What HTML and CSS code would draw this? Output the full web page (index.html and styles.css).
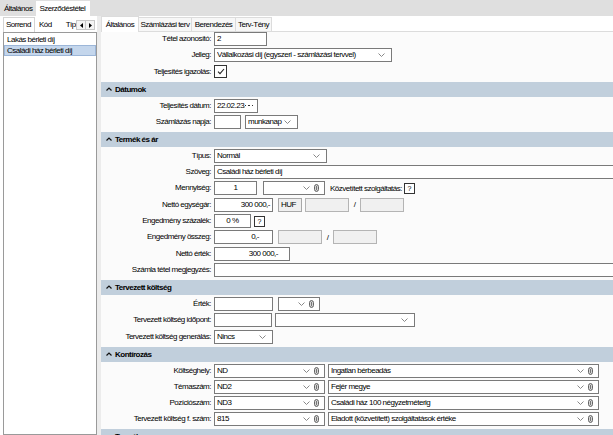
FILE: index.html
```html
<!DOCTYPE html>
<html lang="hu">
<head>
<meta charset="utf-8">
<title>Szerződéstétel</title>
<link rel="stylesheet" href="styles.css">
</head>
<body>
<div class="app">
  <div class="toptabs">
    <span class="ttab">Általános</span>
    <span class="ttab active">Szerződéstétel</span>
  </div>
  <div class="main">
    <aside class="left">
      <div class="ltabs">
        <div class="ltab-wrap">
          <span class="ltab active">Sorrend</span>
          <span class="ltab kod">Kód</span>
          <span class="ltab">Típus</span>
        </div>
        <span class="arr"><svg width="3" height="5" viewBox="0 0 3 5"><path d="M3 0 L0 2.5 L3 5 Z" fill="#000"/></svg></span>
        <span class="arr"><svg width="3" height="5" viewBox="0 0 3 5"><path d="M0 0 L3 2.5 L0 5 Z" fill="#000"/></svg></span>
      </div>
      <div class="list">
        <div class="item">Lakás bérleti díj</div>
        <div class="item selected">Családi ház bérleti díj</div>
      </div>
    </aside>
    <div class="splitter"></div>
    <section class="right">
      <div class="rtabs">
        <span class="rtab active t1">Általános</span>
        <span class="rtab t2">Számlázási terv</span>
        <span class="rtab t3">Berendezés</span>
        <span class="rtab t4">Terv-Tény</span>
      </div>
      <div class="form">
        <div class="body first">
          <div class="row"><span class="lbl">Tétel azonosító:</span><span class="inp w53">2</span></div>
          <div class="row"><span class="lbl">Jelleg:</span>
            <span class="sel w178"><span class="sv">Vállalkozási díj (egyszeri - számlázási tervvel)</span><svg class="chev" width="7" height="4" viewBox="0 0 7 4"><path d="M0.5 0.5 L3.5 3.5 L6.5 0.5" fill="none" stroke="#888" stroke-width="1"/></svg></span>
          </div>
          <div class="row"><span class="lbl">Teljesítés igazolás:</span>
            <span class="check"><svg width="8" height="7" viewBox="0 0 8 7"><path d="M1 3.6 L3 5.6 L7 1" fill="none" stroke="#222" stroke-width="1.1"/></svg></span>
          </div>
        </div>

        <div class="hdr"><svg class="up" width="6" height="4" viewBox="0 0 6 4"><path d="M0.5 3.5 L3 1 L5.5 3.5" fill="none" stroke="#111" stroke-width="1.2"/></svg><span>Dátumok</span></div>
        <div class="body">
          <div class="row"><span class="lbl">Teljesítés dátum:</span>
            <span class="inp w44 date"><span class="sv">22.02.23.</span><span class="dots"><i></i><i></i><i></i></span></span>
          </div>
          <div class="row"><span class="lbl">Számlázás napja:</span>
            <span class="inp w27"></span>
            <span class="sel w53 gap4"><span class="sv">munkanap</span><svg class="chev" width="7" height="4" viewBox="0 0 7 4"><path d="M0.5 0.5 L3.5 3.5 L6.5 0.5" fill="none" stroke="#888" stroke-width="1"/></svg></span>
          </div>
        </div>

        <div class="hdr"><svg class="up" width="6" height="4" viewBox="0 0 6 4"><path d="M0.5 3.5 L3 1 L5.5 3.5" fill="none" stroke="#111" stroke-width="1.2"/></svg><span>Termék és ár</span></div>
        <div class="body">
          <div class="row"><span class="lbl">Típus:</span>
            <span class="sel w113"><span class="sv">Normál</span><svg class="chev" width="7" height="4" viewBox="0 0 7 4"><path d="M0.5 0.5 L3.5 3.5 L6.5 0.5" fill="none" stroke="#888" stroke-width="1"/></svg></span>
          </div>
          <div class="row"><span class="lbl">Szöveg:</span><span class="inp grow">Családi ház bérleti díj</span></div>
          <div class="row"><span class="lbl">Mennyiség:</span>
            <span class="inp w43 center">1</span>
            <span class="sel w62 gap6"><span class="sv"></span><svg class="chev" width="7" height="4" viewBox="0 0 7 4"><path d="M0.5 0.5 L3.5 3.5 L6.5 0.5" fill="none" stroke="#888" stroke-width="1"/></svg><svg class="pin" width="5" height="8" viewBox="0 0 5 8"><rect x="0.6" y="0.6" width="3.8" height="6.8" rx="1.9" fill="#e4e4e4" stroke="#555" stroke-width="1"/><rect x="2" y="2" width="1" height="4" fill="#777"/></svg></span>
            <span class="txt gap5">Közvetített szolgáltatás:</span>
            <span class="qbox gap2">?</span>
          </div>
          <div class="row"><span class="lbl">Nettó egységár:</span>
            <span class="inp w59 right">300 000,-</span>
            <span class="ro w24 gap5">HUF</span>
            <span class="dis w44 gap3"></span>
            <span class="slash">/</span>
            <span class="dis w44"></span>
          </div>
          <div class="row"><span class="lbl">Engedmény százalék:</span>
            <span class="inp w37 center">0 %</span>
            <span class="qbox gap3">?</span>
          </div>
          <div class="row"><span class="lbl">Engedmény összeg:</span>
            <span class="inp w59 right pr13">0,-</span>
            <span class="dis w44 gap5"></span>
            <span class="slash">/</span>
            <span class="dis w44"></span>
          </div>
          <div class="row"><span class="lbl">Nettó érték:</span><span class="inp w76 right pr11">300 000,-</span></div>
          <div class="row"><span class="lbl">Számla tétel megjegyzés:</span><span class="inp grow"></span></div>
        </div>

        <div class="hdr"><svg class="up" width="6" height="4" viewBox="0 0 6 4"><path d="M0.5 3.5 L3 1 L5.5 3.5" fill="none" stroke="#111" stroke-width="1.2"/></svg><span>Tervezett költség</span></div>
        <div class="body">
          <div class="row"><span class="lbl">Érték:</span>
            <span class="inp w59"></span>
            <span class="sel w42 gap5"><span class="sv"></span><svg class="chev" width="7" height="4" viewBox="0 0 7 4"><path d="M0.5 0.5 L3.5 3.5 L6.5 0.5" fill="none" stroke="#888" stroke-width="1"/></svg><svg class="pin" width="5" height="8" viewBox="0 0 5 8"><rect x="0.6" y="0.6" width="3.8" height="6.8" rx="1.9" fill="#e4e4e4" stroke="#555" stroke-width="1"/><rect x="2" y="2" width="1" height="4" fill="#777"/></svg></span>
          </div>
          <div class="row"><span class="lbl">Tervezett költség időpont:</span>
            <span class="inp w58"></span>
            <span class="sel w140 gap3"><span class="sv"></span><svg class="chev" width="7" height="4" viewBox="0 0 7 4"><path d="M0.5 0.5 L3.5 3.5 L6.5 0.5" fill="none" stroke="#888" stroke-width="1"/></svg></span>
          </div>
          <div class="row"><span class="lbl">Tervezett költség generálás:</span>
            <span class="sel w59"><span class="sv">Nincs</span><svg class="chev" width="7" height="4" viewBox="0 0 7 4"><path d="M0.5 0.5 L3.5 3.5 L6.5 0.5" fill="none" stroke="#888" stroke-width="1"/></svg></span>
          </div>
        </div>

        <div class="hdr"><svg class="up" width="6" height="4" viewBox="0 0 6 4"><path d="M0.5 3.5 L3 1 L5.5 3.5" fill="none" stroke="#111" stroke-width="1.2"/></svg><span>Kontírozás</span></div>
        <div class="body">
          <div class="row"><span class="lbl">Költséghely:</span>
            <span class="sel w111"><span class="sv">ND</span><svg class="chev" width="7" height="4" viewBox="0 0 7 4"><path d="M0.5 0.5 L3.5 3.5 L6.5 0.5" fill="none" stroke="#888" stroke-width="1"/></svg><svg class="pin" width="5" height="8" viewBox="0 0 5 8"><rect x="0.6" y="0.6" width="3.8" height="6.8" rx="1.9" fill="#e4e4e4" stroke="#555" stroke-width="1"/><rect x="2" y="2" width="1" height="4" fill="#777"/></svg></span>
            <span class="sel w271 gap3"><span class="sv">Ingatlan bérbeadás</span><svg class="chev" width="7" height="4" viewBox="0 0 7 4"><path d="M0.5 0.5 L3.5 3.5 L6.5 0.5" fill="none" stroke="#888" stroke-width="1"/></svg><svg class="pin" width="5" height="8" viewBox="0 0 5 8"><rect x="0.6" y="0.6" width="3.8" height="6.8" rx="1.9" fill="#e4e4e4" stroke="#555" stroke-width="1"/><rect x="2" y="2" width="1" height="4" fill="#777"/></svg></span>
          </div>
          <div class="row"><span class="lbl">Témaszám:</span>
            <span class="sel w111"><span class="sv">ND2</span><svg class="chev" width="7" height="4" viewBox="0 0 7 4"><path d="M0.5 0.5 L3.5 3.5 L6.5 0.5" fill="none" stroke="#888" stroke-width="1"/></svg><svg class="pin" width="5" height="8" viewBox="0 0 5 8"><rect x="0.6" y="0.6" width="3.8" height="6.8" rx="1.9" fill="#e4e4e4" stroke="#555" stroke-width="1"/><rect x="2" y="2" width="1" height="4" fill="#777"/></svg></span>
            <span class="sel w271 gap3"><span class="sv">Fejér megye</span><svg class="chev" width="7" height="4" viewBox="0 0 7 4"><path d="M0.5 0.5 L3.5 3.5 L6.5 0.5" fill="none" stroke="#888" stroke-width="1"/></svg><svg class="pin" width="5" height="8" viewBox="0 0 5 8"><rect x="0.6" y="0.6" width="3.8" height="6.8" rx="1.9" fill="#e4e4e4" stroke="#555" stroke-width="1"/><rect x="2" y="2" width="1" height="4" fill="#777"/></svg></span>
          </div>
          <div class="row"><span class="lbl">Pozíciószám:</span>
            <span class="sel w111"><span class="sv">ND3</span><svg class="chev" width="7" height="4" viewBox="0 0 7 4"><path d="M0.5 0.5 L3.5 3.5 L6.5 0.5" fill="none" stroke="#888" stroke-width="1"/></svg><svg class="pin" width="5" height="8" viewBox="0 0 5 8"><rect x="0.6" y="0.6" width="3.8" height="6.8" rx="1.9" fill="#e4e4e4" stroke="#555" stroke-width="1"/><rect x="2" y="2" width="1" height="4" fill="#777"/></svg></span>
            <span class="sel w271 gap3"><span class="sv">Családi ház 100 négyzetméterig</span><svg class="chev" width="7" height="4" viewBox="0 0 7 4"><path d="M0.5 0.5 L3.5 3.5 L6.5 0.5" fill="none" stroke="#888" stroke-width="1"/></svg><svg class="pin" width="5" height="8" viewBox="0 0 5 8"><rect x="0.6" y="0.6" width="3.8" height="6.8" rx="1.9" fill="#e4e4e4" stroke="#555" stroke-width="1"/><rect x="2" y="2" width="1" height="4" fill="#777"/></svg></span>
          </div>
          <div class="row"><span class="lbl">Tervezett költség f. szám:</span>
            <span class="sel w111"><span class="sv">815</span><svg class="chev" width="7" height="4" viewBox="0 0 7 4"><path d="M0.5 0.5 L3.5 3.5 L6.5 0.5" fill="none" stroke="#888" stroke-width="1"/></svg><svg class="pin" width="5" height="8" viewBox="0 0 5 8"><rect x="0.6" y="0.6" width="3.8" height="6.8" rx="1.9" fill="#e4e4e4" stroke="#555" stroke-width="1"/><rect x="2" y="2" width="1" height="4" fill="#777"/></svg></span>
            <span class="sel w271 gap3"><span class="sv">Eladott (közvetített) szolgáltatások értéke</span><svg class="chev" width="7" height="4" viewBox="0 0 7 4"><path d="M0.5 0.5 L3.5 3.5 L6.5 0.5" fill="none" stroke="#888" stroke-width="1"/></svg><svg class="pin" width="5" height="8" viewBox="0 0 5 8"><rect x="0.6" y="0.6" width="3.8" height="6.8" rx="1.9" fill="#e4e4e4" stroke="#555" stroke-width="1"/><rect x="2" y="2" width="1" height="4" fill="#777"/></svg></span>
          </div>
        </div>

        <div class="hdr"><svg class="up" width="6" height="4" viewBox="0 0 6 4"><path d="M0.5 3.5 L3 1 L5.5 3.5" fill="none" stroke="#111" stroke-width="1.2"/></svg><span>Termék</span></div>
      </div>
    </section>
  </div>
</div>
</body>
</html>
```
FILE: styles.css
```css
* { box-sizing: border-box; }
html, body { margin: 0; padding: 0; }
body {
  font-family: "Liberation Sans", Arial, sans-serif;
  font-size: 8px;
  letter-spacing: -0.5px;
  color: #000;
  background: #fff;
}
.app {
  width: 613px;
  height: 435px;
  display: flex;
  flex-direction: column;
  overflow: hidden;
  background: #fff;
}

/* top tabs */
.toptabs {
  height: 16px;
  background: #dfdfdf;
  display: flex;
  align-items: flex-end;
  flex: none;
}
.ttab {
  height: 15px;
  line-height: 15px;
  padding: 0 4px;
  white-space: nowrap;
}
.ttab.active {
  background: #fff;
  padding: 0 5px 0 3px;
}

.main {
  flex: 1;
  display: flex;
  min-height: 0;
}

/* left panel */
.left {
  width: 97px;
  flex: none;
  display: flex;
  flex-direction: column;
  background: #fff;
}
.ltabs {
  height: 16px;
  flex: none;
  display: flex;
  align-items: flex-end;
  padding-left: 3px;
}
.ltab-wrap {
  width: 73px;
  display: flex;
  align-items: flex-end;
  overflow: hidden;
  height: 16px;
}
.ltab {
  height: 14px;
  line-height: 13px;
  white-space: nowrap;
  flex: none;
}
.ltab.active {
  height: 15px;
  border: 1px solid #d4d4d4;
  border-bottom: none;
  padding: 0 3px 0 2px;
  margin-right: 4px;
}
.ltab.kod { margin-right: 14px; }
.arr {
  width: 10px;
  height: 10px;
  align-self: center;
  border: 1px solid #c8c8c8;
  background: #f4f4f4;
  display: flex;
  align-items: center;
  justify-content: center;
  margin-top: 2px;
}
.arr + .arr { border-left: none; width: 9px; }
.list {
  flex: 1;
  margin-left: 3px;
  border: 1px solid #9a9a9a;
  background: #fff;
  padding-top: 1px;
}
.item {
  height: 11px;
  line-height: 11px;
  padding-left: 3px;
  white-space: nowrap;
}
.item.selected {
  background: #c4d6ec;
  border: 1px solid #9cb6d8;
  line-height: 9px;
  padding-left: 2px;
}
.splitter {
  width: 4px;
  flex: none;
  background: #ececec;
}

/* right panel */
.right {
  flex: 1;
  min-width: 0;
  display: flex;
  flex-direction: column;
  overflow: hidden;
}
.rtabs {
  height: 16px;
  flex: none;
  display: flex;
  align-items: flex-end;
  background: #fff;
  border-bottom: 1px solid #dcdcdc;
}
.rtab {
  height: 14px;
  line-height: 13px;
  text-align: center;
  white-space: nowrap;
  background: #f7f7f7;
  border: 1px solid #dcdcdc;
  border-bottom: none;
  border-left: none;
}
.rtab.active {
  height: 16px;
  line-height: 15px;
  background: #fff;
  border-left: 1px solid #dcdcdc;
  margin-bottom: -1px;
}
.t1 { width: 38px; }
.t2 { width: 53px; }
.t3 { width: 44px; }
.t4 { width: 36px; }

.form {
  flex: 1;
  background: #fbfbfb;
  display: flex;
  flex-direction: column;
}
.body {
  display: flex;
  flex-direction: column;
  gap: 2.3px;
  padding: 2px 0 3px;
}
.body.first { padding-top: 0; }
.row {
  height: 14px;
  display: flex;
  align-items: center;
  white-space: nowrap;
}
.lbl {
  width: 110px;
  margin-right: 3px;
  text-align: right;
  line-height: 14px;
  flex: none;
}
.hdr {
  height: 15px;
  flex: none;
  background: #c1cfdc;
  display: flex;
  align-items: center;
  padding-left: 5px;
  font-weight: bold;
}
.hdr .up { margin-right: 3px; }

/* controls */
.inp, .sel, .dis, .ro {
  height: 14px;
  line-height: 12px;
  border: 1px solid #7a7a7a;
  background: #fff;
  padding: 0 2px;
  flex: none;
  overflow: hidden;
  white-space: nowrap;
}
.sel {
  display: flex;
  align-items: center;
}
.sv {
  flex: 1;
  overflow: hidden;
  line-height: 12px;
}
.chev { flex: none; margin-right: 4px; }
.pin { flex: none; margin-right: 3px; }
.dis {
  background: #f0f0f0;
  border-color: #b4b4b4;
}
.ro {
  background: #f0f0f0;
  border-color: #a8a8a8;
}
.date { display: flex; align-items: center; }
.dots { display: flex; gap: 2px; margin-right: 2px; }
.dots i { width: 1.5px; height: 1.5px; background: #333; display: block; }
.center { text-align: center; }
.inp.right { text-align: right; }
.pr13 { padding-right: 13px; }
.pr11 { padding-right: 11px; }
.grow { flex: 1; margin-right: -2px; }
.check {
  width: 13px;
  height: 13px;
  border: 1px solid #333;
  background: #fff;
  display: flex;
  align-items: center;
  justify-content: center;
}
.qbox {
  width: 11px;
  height: 11px;
  border: 1px solid #333;
  background: #fff;
  line-height: 9px;
  text-align: center;
  font-size: 7px;
  letter-spacing: 0;
}
.slash {
  width: 11px;
  text-align: center;
  flex: none;
}
.txt { flex: none; }

.w24 { width: 24px; }
.w27 { width: 27px; }
.w37 { width: 37px; }
.w42 { width: 42px; }
.w43 { width: 43px; }
.w44 { width: 44px; }
.w53 { width: 53px; }
.w58 { width: 58px; }
.w59 { width: 59px; }
.w62 { width: 62px; }
.w76 { width: 76px; }
.w111 { width: 111px; }
.w113 { width: 113px; }
.w140 { width: 140px; }
.w178 { width: 178px; }
.w271 { width: 271px; }
.gap2 { margin-left: 2px; }
.gap3 { margin-left: 3px; }
.gap4 { margin-left: 4px; }
.gap5 { margin-left: 5px; }
.gap6 { margin-left: 6px; }
```
